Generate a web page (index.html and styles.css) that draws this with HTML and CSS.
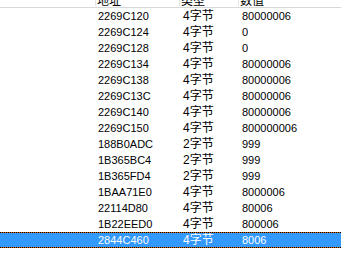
FILE: index.html
```html
<!DOCTYPE html>
<html>
<head>
<meta charset="utf-8">
<link rel="stylesheet" href="styles.css">
</head>
<body>
<div class="list">
  <div class="head">
    <div class="hcell"></div>
    <div class="hcell">地址</div>
    <div class="hcell">类型</div>
    <div class="hcell last">数值</div>
  </div>
  <div class="row"><span class="idx"></span><span class="addr">2269C120</span><span class="type">4字节</span><span class="val">80000006</span></div>
  <div class="row"><span class="idx"></span><span class="addr">2269C124</span><span class="type">4字节</span><span class="val">0</span></div>
  <div class="row"><span class="idx"></span><span class="addr">2269C128</span><span class="type">4字节</span><span class="val">0</span></div>
  <div class="row"><span class="idx"></span><span class="addr">2269C134</span><span class="type">4字节</span><span class="val">80000006</span></div>
  <div class="row"><span class="idx"></span><span class="addr">2269C138</span><span class="type">4字节</span><span class="val">80000006</span></div>
  <div class="row"><span class="idx"></span><span class="addr">2269C13C</span><span class="type">4字节</span><span class="val">80000006</span></div>
  <div class="row"><span class="idx"></span><span class="addr">2269C140</span><span class="type">4字节</span><span class="val">80000006</span></div>
  <div class="row"><span class="idx"></span><span class="addr">2269C150</span><span class="type">4字节</span><span class="val">800000006</span></div>
  <div class="row"><span class="idx"></span><span class="addr">188B0ADC</span><span class="type">2字节</span><span class="val">999</span></div>
  <div class="row"><span class="idx"></span><span class="addr">1B365BC4</span><span class="type">2字节</span><span class="val">999</span></div>
  <div class="row"><span class="idx"></span><span class="addr">1B365FD4</span><span class="type">2字节</span><span class="val">999</span></div>
  <div class="row"><span class="idx"></span><span class="addr">1BAA71E0</span><span class="type">4字节</span><span class="val">8000006</span></div>
  <div class="row"><span class="idx"></span><span class="addr">22114D80</span><span class="type">4字节</span><span class="val">80006</span></div>
  <div class="row"><span class="idx"></span><span class="addr">1B22EED0</span><span class="type">4字节</span><span class="val">800006</span></div>
  <div class="row selected"><span class="idx"></span><span class="addr">2844C460</span><span class="type">4字节</span><span class="val">8006</span></div>
</div>
</body>
</html>
```

FILE: styles.css
```css
html, body {
  margin: 0;
  padding: 0;
  background: #ffffff;
}
body {
  font-family: "Liberation Sans", "Noto Sans CJK SC", sans-serif;
  font-size: 11px;
  color: #000000;
}
.list {
  width: 341px;
  height: 270px;
  overflow: hidden;
  background: #ffffff;
}
.head {
  display: grid;
  grid-template-columns: 96px 84px 59px 1fr;
  height: 8px;
  overflow: hidden;
  border-bottom: 1px solid #d8d8d8;
  box-sizing: border-box;
  background: #ffffff;
}
.hcell {
  border-right: 1px solid #e3e3e3;
  padding-left: 1px;
  font-family: "Noto Sans CJK SC", sans-serif;
  font-size: 12px;
  line-height: 12px;
  height: 6px;
  display: flex;
  align-items: flex-end;
  overflow: hidden;
  color: #000;
}
.hcell.last {
  border-right: none;
}
.row {
  display: grid;
  grid-template-columns: 96px 84px 59px 1fr;
  height: 16px;
  line-height: 16px;
  white-space: nowrap;
}
.addr {
  padding-left: 2px;
}
.type {
  padding-left: 3px;
  font-size: 12px;
}
.val {
  padding-left: 3px;
}
.selected {
  background-color: #3399ff;
  color: #ffffff;
  line-height: 14px;
  border-top: 1px solid transparent;
  border-bottom: 1px solid transparent;
  background-image:
    repeating-linear-gradient(90deg, #000000 0 1px, #cc6600 1px 2px),
    repeating-linear-gradient(90deg, #000000 0 1px, #cc6600 1px 2px);
  background-size: 100% 1px, 100% 1px;
  background-position: 0 0, 0 100%;
  background-repeat: no-repeat;
  background-origin: border-box;
  background-clip: border-box;
  box-sizing: border-box;
}
```
